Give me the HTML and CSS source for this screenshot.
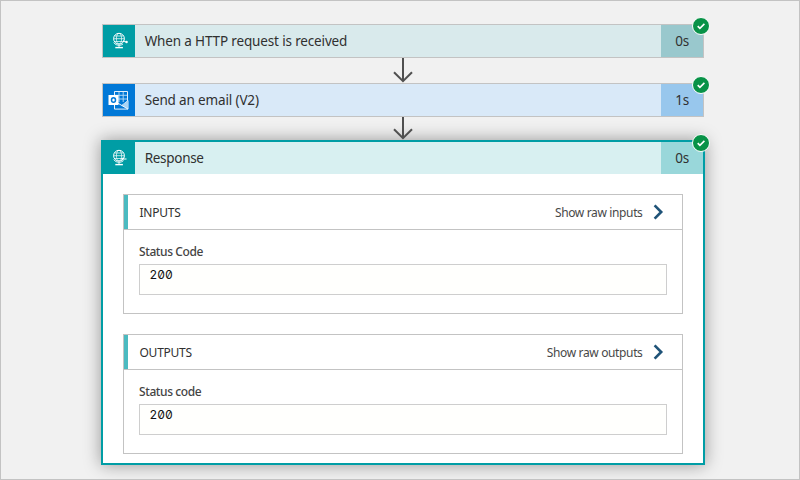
FILE: index.html
```html
<!DOCTYPE html>
<html lang="en">
<head>
<meta charset="utf-8">
<title>Workflow run</title>
<link rel="stylesheet" href="styles.css">
</head>
<body>
<svg class="defs" width="0" height="0">
  <symbol id="globe" viewBox="0 0 32 32">
    <g fill="none" stroke="#fff">
      <circle cx="16" cy="13.7" r="5.4" stroke-width="1"/>
      <ellipse cx="16" cy="13.7" rx="2.6" ry="5.4" stroke-width=".7"/>
      <path d="M10.6 13.7h10.8M11.5 11h9M11.5 16.5h9" stroke-width=".7"/>
      <path d="M10.6 17.6q2.2 2.8 5.4 2.8 2.2 0 4-1.4M16 20.5v2" stroke-width=".9"/>
      <path d="M12.3 22.6h7.6" stroke-width="1.4"/>
    </g>
  </symbol>
  <symbol id="check" viewBox="0 0 18 18">
    <circle cx="9" cy="9" r="8.5" fill="#089247" stroke="#fff" stroke-width="1"/>
    <path d="M5.7 9.1l2.2 2.3 4.5-4.5" fill="none" stroke="#fff" stroke-width="1.6"/>
  </symbol>
  <symbol id="chevron" viewBox="0 0 12 16">
    <path d="M1.6 1.3L8.2 8l-6.6 6.7" fill="none" stroke="#1f5378" stroke-width="2.6"/>
  </symbol>
</svg>
<main class="flow">
  <section class="card trigger">
    <div class="icon"><svg width="32" height="32"><use href="#globe"/><path d="M20 15.6q1.8 1.8 4 1.2" fill="none" stroke="#fff"/><circle cx="23.6" cy="17" r="1.2" fill="#fff"/></svg></div>
    <h2 class="name">When a HTTP request is received</h2>
    <div class="time">0s</div>
    <svg class="badge"><use href="#check"/></svg>
  </section>
  <svg class="arrow" viewBox="0 0 24 25"><path d="M12 0v23M3 14.2l9 9 9-9"/></svg>
  <section class="card email">
    <div class="icon"><svg width="32" height="32">
      <path d="M11.5 7.5h13v14h-13z" fill="#0078d7" stroke="#fff" stroke-width=".9"/>
      <path d="M12 11.3h12M12 15h12M16 8v10M20.2 8v10" fill="none" stroke="#b8dcf6" stroke-width=".9"/>
      <path d="M11.5 17l7.3 4.5L25 16.5v8.6H11.5z" fill="#0078d7" stroke="#fff" stroke-width=".9"/>
      <path d="M18.8 21.5l6.2 3.6v-8.6z" fill="#a9d4f5"/>
      <path d="M18.8 21.5l6.2 3.6" stroke="#fff" stroke-width=".9"/>
      <rect x="5.5" y="11" width="10" height="10" fill="#fff"/>
      <ellipse cx="10.5" cy="16" rx="2" ry="2.3" fill="none" stroke="#0078d7" stroke-width="1.5"/>
    </svg></div>
    <h2 class="name">Send an email (V2)</h2>
    <div class="time">1s</div>
    <svg class="badge"><use href="#check"/></svg>
  </section>
  <svg class="arrow short" viewBox="0 2 24 23"><path d="M12 0v23M3 14.2l9 9 9-9"/></svg>
  <section class="response">
    <header class="bar">
      <div class="icon"><svg width="32" height="32"><use href="#globe"/><path d="M18.5 17h5M20.5 15.4L18.7 17l1.8 1.6" fill="none" stroke="#fff"/></svg></div>
      <h2 class="name">Response</h2>
      <div class="time">0s</div>
    </header>
    <svg class="badge"><use href="#check"/></svg>
    <div class="details">
      <article class="panel">
        <div class="head"><h3>INPUTS</h3><a class="raw">Show raw inputs</a><svg class="chevron"><use href="#chevron"/></svg></div>
        <div class="body"><div class="label">Status Code</div><div class="field">200</div></div>
      </article>
      <article class="panel">
        <div class="head"><h3>OUTPUTS</h3><a class="raw">Show raw outputs</a><svg class="chevron"><use href="#chevron"/></svg></div>
        <div class="body"><div class="label">Status code</div><div class="field">200</div></div>
      </article>
    </div>
  </section>
</main>
</body>
</html>
```
FILE: styles.css
```css
* { box-sizing: border-box; }
body {
  margin: 0;
  width: 800px;
  height: 480px;
  overflow: hidden;
  border: 1px solid #c3c3c3;
  background: #f1f1f1;
  font-family: "Noto Sans", "Open Sans", sans-serif;
  color: #303030;
}
h2, h3 { margin: 0; font-weight: 400; }
svg { display: block; }
.defs { position: absolute; }
.flow {
  display: flex;
  flex-direction: column;
  width: 604px;
  margin: 23px 0 0 100px;
}
.card {
  position: relative;
  display: flex;
  height: 34px;
  margin: 0 1px;
  border: 1px solid #c3c3c3;
}
.trigger { background: #d9eaec; }
.email { background: #d9e9f8; }
.icon { width: 32px; height: 32px; background: #009da5; }
.email .icon { background: #0078d7; }
.name {
  flex: 1;
  padding-left: 9.7px;
  font-size: 13.5px;
  letter-spacing: -.15px;
  line-height: 33px;
  white-space: nowrap;
}
.response .name { letter-spacing: -.3px; }
.time {
  width: 42px;
  font-size: 13.5px;
  letter-spacing: -.3px;
  line-height: 33px;
  height: 32px;
  text-align: center;
  background: #99c8cd;
}
.email .time { background: #98c7ed; }
.badge {
  position: absolute;
  z-index: 2;
  top: -8px;
  right: -7px;
  width: 18px;
  height: 18px;
}
.arrow {
  width: 24px;
  height: 25px;
  margin-left: 290px;
  fill: none;
  stroke: #505050;
  stroke-width: 2;
}
.arrow.short { position: relative; z-index: 1; height: 23px; }
.response {
  position: relative;
  height: 325px;
  border: 2px solid #009da5;
  background: #fff;
  box-shadow: 0 0 16px rgba(0, 0, 0, .38);
}
.bar { display: flex; height: 32px; background: #d8f0f1; }
.bar .time { background: #99d7da; }
.details {
  display: grid;
  gap: 20px;
  padding: 20px;
}
.panel { height: 120px; border: 1px solid #c3c3c3; }
.head {
  display: flex;
  align-items: center;
  height: 34px;
  padding: 0 17px 0 11.5px;
  border-left: 4px solid #4bbac0;
  box-shadow: 0 1px #c3c3c3;
  margin-bottom: 1px;
}
.head h3 { flex: 1; font-size: 12px; letter-spacing: -.25px; }
.raw { font-size: 12px; color: #484848; letter-spacing: -.36px; }
.chevron { width: 12px; height: 16px; margin-left: 10.5px; }
.body { padding: 12px 15px 0; }
.label {
  height: 22px;
  font-size: 12px;
  line-height: 19px;
  font-weight: 500;
  letter-spacing: -.4px;
  color: #444;
}
.field {
  height: 31px;
  padding-left: 9.5px;
  border: 1px solid #cecece;
  background: #fffffd;
  color: #111;
  font-family: Inter, "DejaVu Sans Mono", monospace;
  font-feature-settings: "zero", "tnum";
  font-size: 12px;
  line-height: 20px;
}
```
